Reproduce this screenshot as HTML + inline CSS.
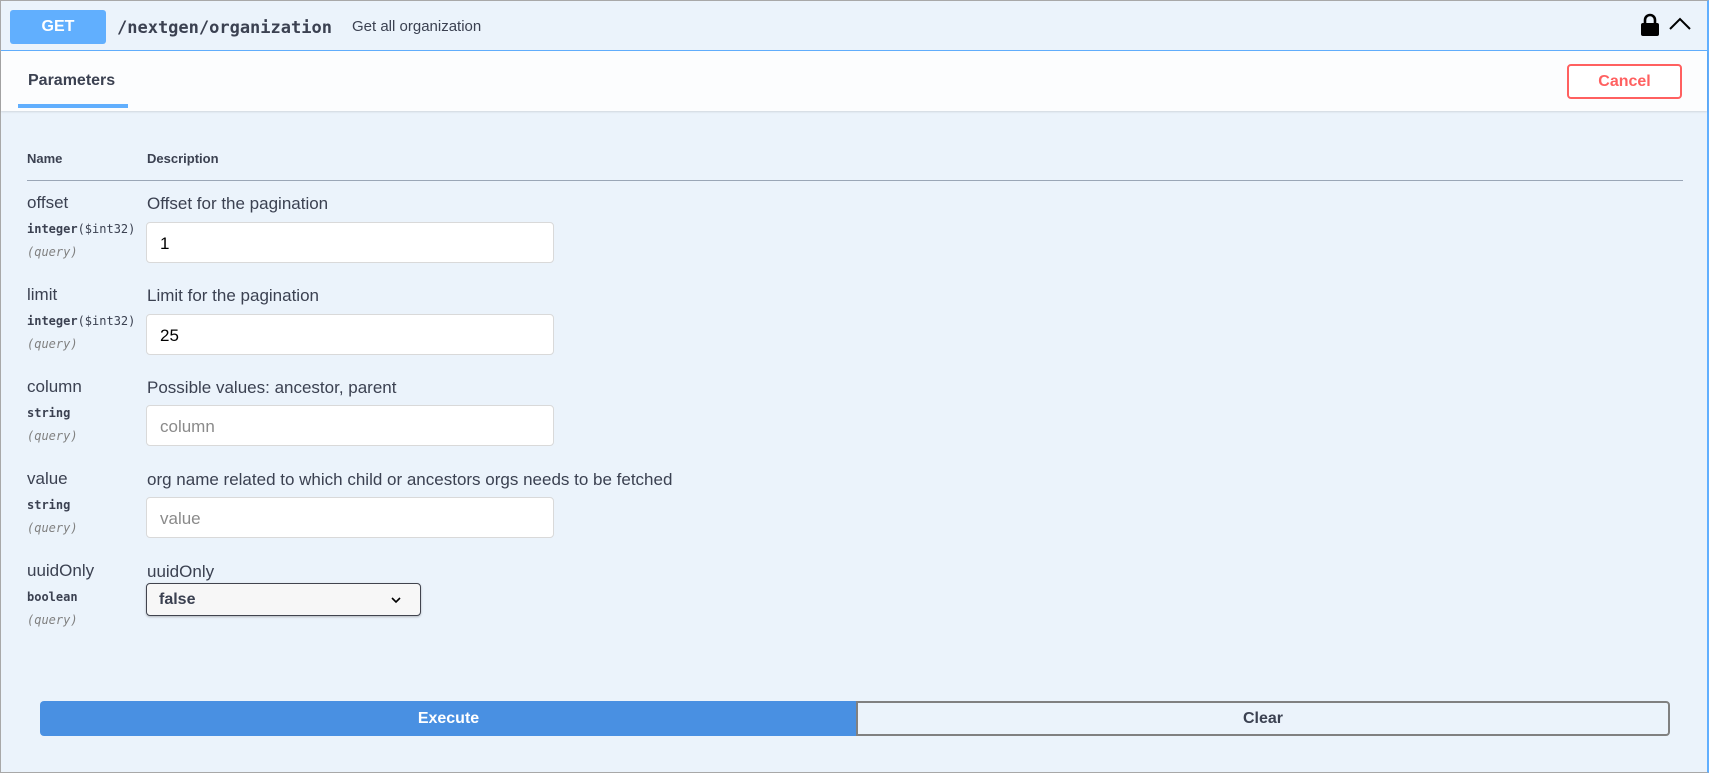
<!DOCTYPE html>
<html><head><style>
*{box-sizing:border-box;margin:0;padding:0}
body{width:1709px;height:773px;background:#fff;font-family:"Liberation Sans",sans-serif;position:relative;overflow:hidden}
.abs{position:absolute}
.frame{left:0;top:0;width:1709px;height:773px;border:1px solid #a8a8a8;border-right:2px solid #61affe;background:#ebf3fb}
.hdr{left:1px;top:1px;width:1706px;height:50px;border-bottom:1px solid #61affe;background:#ebf3fb}
.get{left:10px;top:10px;width:96px;height:34px;background:#61affe;border-radius:3px;color:#fff;font-weight:bold;font-size:16px;text-align:center;line-height:34px}
.path{left:117px;top:18px;font-family:"DejaVu Sans Mono",monospace;font-weight:bold;font-size:17px;color:#3b4151}
.sum{left:352px;top:18px;font-size:15px;color:#3b4151}
.tabbar{left:1px;top:51px;width:1706px;height:60px;background:#fcfdfe;box-shadow:0 1px 2px rgba(0,0,0,.12)}
.tab{left:28px;top:72px;font-size:16px;font-weight:bold;color:#3b4151}
.uline{left:18px;top:104px;width:110px;height:4px;background:#61affe}
.cancel{left:1567px;top:64px;width:115px;height:35px;border:2px solid #ff6060;border-radius:4px;color:#ff6060;font-weight:bold;font-size:16px;text-align:center;line-height:31px;background:#fff}
.th{font-size:13px;font-weight:bold;color:#3b4151;top:151px}
.hl{left:27px;top:180px;width:1656px;height:1px;background:#9aa6b6}
.nm{left:27px;font-size:17px;color:#3b4151}
.ty{left:27px;font-family:"DejaVu Sans Mono",monospace;font-size:12px;font-weight:bold;color:#3b4151}
.q{left:27px;font-family:"DejaVu Sans Mono",monospace;font-size:12px;font-style:italic;color:#808080}
.ds{left:147px;font-size:17px;color:#3b4151}
.inp{left:146px;width:408px;height:41px;background:#fff;border:1px solid #d9d9d9;border-radius:4px;font-size:17px;padding:11px 13px;color:#000}
.ph{color:#8a8a8a}
.sel{left:146px;top:583px;width:275px;height:33px;background:#f7f7f7;border:1px solid #41444e;border-radius:4px;box-shadow:0 1px 2px rgba(0,0,0,.25);font-weight:bold;font-size:16px;color:#3b4151;padding:7px 12px}
.exe{left:40px;top:701px;width:817px;height:35px;background:#4990e2;border-radius:4px 0 0 4px;color:#fff;font-weight:bold;font-size:16px;text-align:center;line-height:35px}
.clr{left:856px;top:701px;width:814px;height:35px;border:2px solid #808080;border-radius:0 4px 4px 0;color:#3b4151;font-weight:bold;font-size:16px;text-align:center;line-height:31px;background:#ebf3fb}
</style></head><body>
<div class="abs frame"></div>
<div class="abs hdr"></div>
<div class="abs get">GET</div>
<div class="abs path">/nextgen/organization</div>
<div class="abs sum">Get all organization</div>
<svg class="abs" style="left:1640px;top:13px" width="20" height="24" viewBox="0 0 20 24"><path d="M5 11V7a5 5 0 0 1 10 0v4" fill="none" stroke="#000" stroke-width="2.6"/><rect x="1" y="10" width="18" height="13" rx="2" fill="#000"/></svg>
<svg class="abs" style="left:1668px;top:16px" width="24" height="16" viewBox="0 0 24 16"><path d="M2 13L12 3l10 10" fill="none" stroke="#000" stroke-width="2"/></svg>
<div class="abs tabbar"></div>
<div class="abs tab">Parameters</div>
<div class="abs uline"></div>
<div class="abs cancel">Cancel</div>
<div class="abs th" style="left:27px">Name</div>
<div class="abs th" style="left:147px">Description</div>
<div class="abs hl"></div>

<div class="abs nm" style="top:193px">offset</div>
<div class="abs ty" style="top:222px">integer<span style="font-weight:normal">($int32)</span></div>
<div class="abs q" style="top:245px">(query)</div>
<div class="abs ds" style="top:194px">Offset for the pagination</div>
<div class="abs inp" style="top:222px">1</div>

<div class="abs nm" style="top:285px">limit</div>
<div class="abs ty" style="top:314px">integer<span style="font-weight:normal">($int32)</span></div>
<div class="abs q" style="top:337px">(query)</div>
<div class="abs ds" style="top:286px">Limit for the pagination</div>
<div class="abs inp" style="top:314px">25</div>

<div class="abs nm" style="top:377px">column</div>
<div class="abs ty" style="top:406px">string</div>
<div class="abs q" style="top:429px">(query)</div>
<div class="abs ds" style="top:378px">Possible values: ancestor, parent</div>
<div class="abs inp ph" style="top:405px">column</div>

<div class="abs nm" style="top:469px">value</div>
<div class="abs ty" style="top:498px">string</div>
<div class="abs q" style="top:521px">(query)</div>
<div class="abs ds" style="top:470px">org name related to which child or ancestors orgs needs to be fetched</div>
<div class="abs inp ph" style="top:497px">value</div>

<div class="abs nm" style="top:561px">uuidOnly</div>
<div class="abs ty" style="top:590px">boolean</div>
<div class="abs q" style="top:613px">(query)</div>
<div class="abs ds" style="top:562px">uuidOnly</div>
<div class="abs sel">false</div>
<svg class="abs" style="left:390px;top:595px" width="12" height="10" viewBox="0 0 12 10"><path d="M2 3l4 4 4-4" fill="none" stroke="#000" stroke-width="1.6"/></svg>

<div class="abs exe">Execute</div>
<div class="abs clr">Clear</div>
</body></html>
